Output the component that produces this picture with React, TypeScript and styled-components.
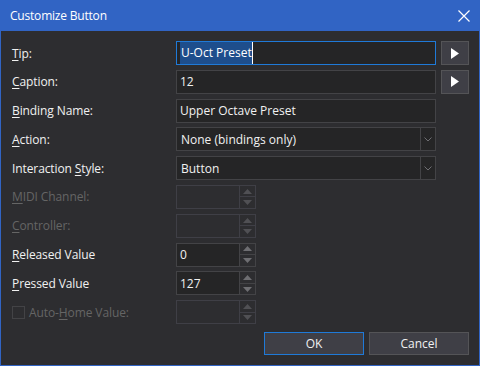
import React from "react";
import styled, { createGlobalStyle } from "styled-components";

const Global = createGlobalStyle`
  html, body { margin: 0; padding: 0; background: #2d2d30; }
  body { font-family: "Open Sans", "Noto Sans", sans-serif; font-size: 12px; }
  * { box-sizing: border-box; }
`;

const Window = styled.div`
  width: 480px;
  height: 366px;
  display: flex;
  flex-direction: column;
  background: #2d2d30;
  border: 1px solid #3164c4;
  border-top: none;
  color: #f1f1f1;
`;

const TitleBar = styled.div`
  height: 31px;
  margin: 0 -1px;
  background: #3164c4;
  display: flex;
  align-items: center;
  justify-content: space-between;
  padding: 0 9px 0 10px;
  color: #ffffff;
  font-size: 12px;
  letter-spacing: -0.2px;
`;

const CloseBtn = styled.div`
  width: 14px;
  height: 14px;
  display: flex;
  align-items: center;
  justify-content: center;
`;

const Body = styled.div`
  flex: 1;
  display: flex;
  flex-direction: column;
  padding: 10px 10px 0 11px;
`;

const Form = styled.div`
  display: grid;
  grid-template-columns: 159px 260px 28px;
  grid-auto-rows: 24px;
  column-gap: 5px;
  row-gap: 4.8px;
`;

const Label = styled.div<{ $disabled?: boolean }>`
  grid-column: 1;
  display: flex;
  align-items: center;
  gap: 4px;
  color: ${(p) => (p.$disabled ? "#656565" : "#f1f1f1")};
  letter-spacing: -0.1px;
  white-space: nowrap;
  u { text-underline-offset: 2px; }
`;

const TextBox = styled.div<{ $focused?: boolean }>`
  grid-column: 2;
  display: flex;
  align-items: center;
  padding-left: 3px;
  background: #252526;
  border: 1px solid ${(p) => (p.$focused ? "#1f7ad8" : "#434346")};
  color: #f1f1f1;
  white-space: nowrap;
`;

const Selection = styled.span`
  background: #1e4e8c;
  color: #ffffff;
  padding: 2px 0 3px 1px;
  border-right: 1px solid #ffffff;
`;

const PlayButton = styled.div`
  grid-column: 3;
  display: flex;
  align-items: center;
  justify-content: center;
  background: #3f3f46;
  border: 1px solid #545457;
`;

const Combo = styled.div`
  grid-column: 2;
  display: flex;
  background: #252526;
  border: 1px solid #434346;
`;

const ComboText = styled.div`
  flex: 1;
  display: flex;
  align-items: center;
  padding-left: 4px;
  white-space: nowrap;
`;

const ComboArrow = styled.div`
  width: 15px;
  border-left: 1px solid #434346;
  display: flex;
  align-items: center;
  justify-content: center;
`;

const Spin = styled.div<{ $disabled?: boolean }>`
  grid-column: 2;
  width: 80px;
  display: flex;
  background: ${(p) => (p.$disabled ? "#2d2d30" : "#252526")};
  border: 1px solid ${(p) => (p.$disabled ? "#3f3f46" : "#434346")};
`;

const SpinText = styled.div`
  flex: 1;
  display: flex;
  align-items: center;
  padding-left: 3px;
  color: #f1f1f1;
`;

const SpinButtons = styled.div<{ $disabled?: boolean }>`
  width: 16px;
  display: flex;
  flex-direction: column;
  border-left: 1px solid ${(p) => (p.$disabled ? "#3f3f46" : "#434346")};
  background: #2d2d30;
`;

const SpinHalf = styled.div<{ $disabled?: boolean; $top?: boolean }>`
  flex: 1;
  display: flex;
  align-items: center;
  justify-content: center;
  border-top: ${(p) => (p.$top ? "none" : `1px solid ${p.$disabled ? "#3f3f46" : "#434346"}`)};
`;

const CheckBox = styled.div`
  width: 13px;
  height: 13px;
  border: 1px solid #434346;
`;

const Footer = styled.div`
  margin-top: 8px;
  display: flex;
  justify-content: flex-end;
  gap: 5px;
`;

const Button = styled.div<{ $default?: boolean }>`
  width: 100px;
  height: 23px;
  display: flex;
  align-items: center;
  justify-content: center;
  background: #3f3f46;
  border: 1px solid ${(p) => (p.$default ? "#1f7ad8" : "#545457")};
  color: #f1f1f1;
  font-size: 12px;
`;

const Play = () => (
  <svg width="10" height="11" viewBox="0 0 10 11">
    <polygon points="1,0 9,5.5 1,11" fill="#ffffff" />
  </svg>
);

const Chevron = () => (
  <svg width="8" height="5" viewBox="0 0 8 5">
    <polyline points="0.5,0.5 4,4 7.5,0.5" fill="none" stroke="#6e6e72" strokeWidth="1" />
  </svg>
);

const Tri = ({ up, disabled }: { up?: boolean; disabled?: boolean }) => (
  <svg width="9" height="5" viewBox="0 0 9 5">
    <polygon
      points={up ? "0,5 4.5,0 9,5" : "0,0 4.5,5 9,0"}
      fill={disabled ? "#505054" : "#6e6e72"}
    />
  </svg>
);

const Spinner = ({ value, disabled }: { value?: string; disabled?: boolean }) => (
  <Spin $disabled={disabled}>
    <SpinText>{value}</SpinText>
    <SpinButtons $disabled={disabled}>
      <SpinHalf $top $disabled={disabled}>
        <Tri up disabled={disabled} />
      </SpinHalf>
      <SpinHalf $disabled={disabled}>
        <Tri disabled={disabled} />
      </SpinHalf>
    </SpinButtons>
  </Spin>
);

export default function App() {
  return (
    <>
      <Global />
      <Window>
        <TitleBar>
          <span>Customize Button</span>
          <CloseBtn>
            <svg width="12" height="12" viewBox="0 0 12 12">
              <path d="M0.5 0.5 L11.5 11.5 M11.5 0.5 L0.5 11.5" stroke="#ffffff" strokeWidth="1.2" />
            </svg>
          </CloseBtn>
        </TitleBar>
        <Body>
          <Form>
            <Label><span><u>T</u>ip:</span></Label>
            <TextBox $focused><Selection>U-Oct Preset</Selection></TextBox>
            <PlayButton><Play /></PlayButton>

            <Label><span><u>C</u>aption:</span></Label>
            <TextBox>12</TextBox>
            <PlayButton><Play /></PlayButton>

            <Label><span><u>B</u>inding Name:</span></Label>
            <TextBox>Upper Octave Preset</TextBox>

            <Label><span><u>A</u>ction:</span></Label>
            <Combo>
              <ComboText>None (bindings only)</ComboText>
              <ComboArrow><Chevron /></ComboArrow>
            </Combo>

            <Label><span>Interaction <u>S</u>tyle:</span></Label>
            <Combo>
              <ComboText>Button</ComboText>
              <ComboArrow><Chevron /></ComboArrow>
            </Combo>

            <Label $disabled><span><u>M</u>IDI Channel:</span></Label>
            <Spinner disabled />

            <Label $disabled><span><u>C</u>ontroller:</span></Label>
            <Spinner disabled />

            <Label><span><u>R</u>eleased Value</span></Label>
            <Spinner value="0" />

            <Label><span><u>P</u>ressed Value</span></Label>
            <Spinner value="127" />

            <Label $disabled><CheckBox /><span>Auto-<u>H</u>ome Value:</span></Label>
            <Spinner disabled />
          </Form>
          <Footer>
            <Button $default>OK</Button>
            <Button>Cancel</Button>
          </Footer>
        </Body>
      </Window>
    </>
  );
}
